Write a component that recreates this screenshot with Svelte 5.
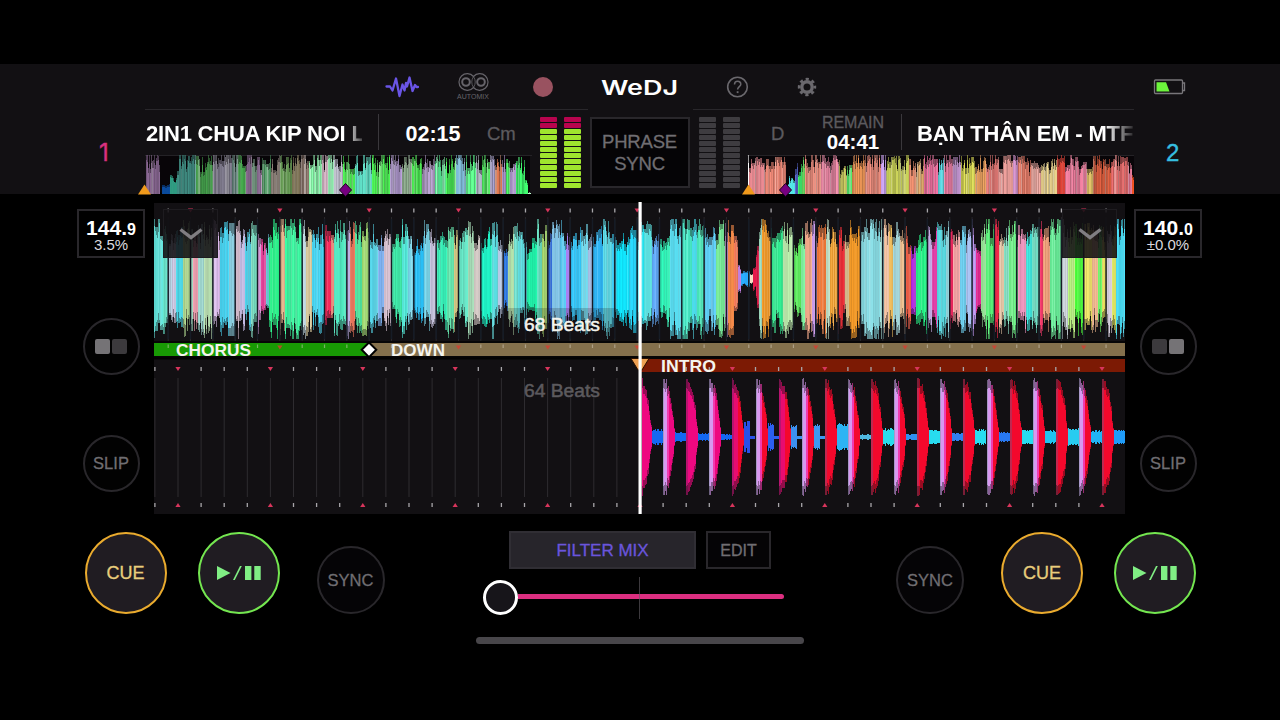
<script>
  // Each band is [start x, colour, height in px]; it runs up to the next band.
  const mainBands = [
    [154, '#62e4dc', 56], [163, '#66e0c8', 50], [168, '#b5cfe0', 42], [172, '#cbc8e2', 40], [176, '#4fd8e8', 44],
    [183, '#b0d890', 54], [190, '#a8e0c8', 52], [193, '#f0a0b0', 52], [198, '#a0d8d0', 50], [204, '#b8dfb0', 54],
    [213, '#dcc0ec', 58], [217, '#d6b4e6', 46], [220, '#48d6f4', 52], [229, '#8fd4e6', 56], [235, '#d0b8c8', 58],
    [240, '#c0b8e0', 50], [245, '#4fd0e8', 44], [251, '#78dcc0', 54], [257, '#e0a0e0', 52], [261, '#e04098', 42],
    [266, '#6cc8d8', 32], [269, '#2cf58c', 54], [280, '#e0b088', 56], [285, '#3cf5a0', 58], [302, '#c0d8e0', 58],
    [306, '#d8c898', 52], [312, '#48d4f0', 46], [324, '#f02858', 57], [331, '#f09080', 44], [334, '#50e8c0', 52],
    [346, '#c8b8f0', 60], [350, '#f47c60', 54], [355, '#50e4a0', 54], [362, '#a0d870', 52], [369, '#58d8ec', 52],
    [378, '#80b4f4', 46], [384, '#dcc4d4', 50], [392, '#40e8a8', 38], [402, '#50e8d8', 58], [408, '#78d4e8', 42],
    [413, '#28c0f8', 34], [424, '#7cd8ec', 54], [430, '#c8c4e0', 46], [437, '#38f0b8', 40], [447, '#68e8b0', 54],
    [454, '#d8c880', 48], [459, '#68e8c8', 40], [468, '#a8dcb8', 56], [474, '#d8ccc8', 42], [481, '#20f4c8', 40],
    [492, '#58dce0', 58], [498, '#b8c8e4', 42], [504, '#2878e8', 26], [508, '#b0e0a8', 46], [514, '#70e0d0', 56],
    [518, '#60dce0', 50], [527, '#20f0a8', 28], [537, '#68e0c0', 58], [542, '#a8d870', 54], [548, '#3068d0', 46],
    [552, '#88ccf0', 54], [560, '#58c8f0', 56], [566, '#a880f0', 42], [571, '#30c4f8', 40], [581, '#70dcf0', 58],
    [588, '#b0c8f0', 44], [593, '#30b8f8', 40], [603, '#60dce8', 58], [612, '#40d0f8', 44], [616, '#10e4fc', 40],
    [629, '#28d4f8', 50], [637, '#20e8f4', 50], [644, '#60e8e8', 56], [652, '#60a8f8', 46], [660, '#30f4b8', 36],
    [670, '#58dcf0', 58], [682, '#48ecc8', 60], [692, '#48dcec', 60], [697, '#48e8b8', 60], [704, '#60d0f8', 50],
    [716, '#78ec98', 54], [725, '#d8a0e0', 54], [728, '#f08848', 57], [734, '#f07858', 40], [738, '#c080e0', 14],
    [741, '#28a8f8', 8], [750, '#f0d8c0', 5], [753, '#e01848', 12], [756, '#e01848', 26], [759, '#a0dcc0', 60],
    [762, '#f09828', 56], [771, '#30ec90', 48], [783, '#b8e8a8', 57], [794, '#60f060', 32], [801, '#80f0a0', 44],
    [805, '#f0a888', 59], [812, '#d0a0f0', 58], [817, '#f07838', 48], [826, '#c0e0c8', 58], [830, '#f0a030', 48],
    [838, '#f03038', 50], [845, '#d0b888', 42], [849, '#f09828', 56], [861, '#88dce4', 60], [880, '#a8e0d8', 60],
    [884, '#f0c0a0', 58], [889, '#f4c060', 50], [893, '#a8dce0', 58], [900, '#f0c090', 52], [906, '#f06048', 50],
    [911, '#b028e0', 32], [916, '#28f488', 44], [928, '#c0a8e0', 58], [932, '#f040b0', 38], [937, '#58dce4', 57],
    [946, '#90d0d8', 52], [950, '#f02860', 57], [953, '#f8a8a8', 40], [960, '#70d0f0', 50], [966, '#a8c0f0', 46],
    [972, '#c098f0', 56], [976, '#e02890', 34], [981, '#90e090', 46], [986, '#58f078', 58], [995, '#f02848', 56],
    [999, '#e8c8a8', 52], [1004, '#80dcc0', 44], [1009, '#70f088', 56], [1018, '#f098c0', 50], [1026, '#40e8e0', 48],
    [1032, '#70d8c0', 50], [1040, '#f03868', 57], [1043, '#f0a078', 44], [1050, '#68ec98', 58], [1062, '#c8d0d8', 56],
    [1068, '#b8f080', 56], [1075, '#48f838', 52], [1084, '#f0e468', 52], [1092, '#f0b890', 50], [1098, '#70f868', 50],
    [1102, '#e8e058', 46], [1107, '#d0c8d8', 56], [1112, '#d8e060', 46], [1116, '#48dcf4', 57], [1125],
  ];

  const overviewOne = [
    [146, '#8c6a96', 39], [160, '#000000', 2], [162, '#0a4a9a', 13], [170, '#2f9a80', 19], [177, '#3f8a80', 39],
    [196, '#48a850', 35], [213, '#807c8e', 39], [232, '#608078', 38], [238, '#48b050', 37], [246, '#907098', 39],
    [252, '#70907c', 39], [257, '#907098', 39], [262, '#4a9a60', 36], [271, '#8c8078', 38], [280, '#6aa058', 35],
    [292, '#8c8060', 38], [300, '#907a70', 36], [309, '#8dffb0', 39], [322, '#d8b8c8', 39], [328, '#90f0b0', 38],
    [334, '#c8c8d8', 38], [343, '#48f850', 35], [355, '#60e0c8', 39], [372, '#50f858', 36], [390, '#b8a0d8', 39],
    [402, '#98b898', 39], [412, '#50f858', 38], [422, '#b8a0d0', 39], [435, '#60ffa0', 38], [446, '#50ff60', 35],
    [456, '#88c8e8', 39], [466, '#60ff90', 38], [476, '#b0b8c8', 39], [482, '#50e860', 37], [490, '#a8a0d0', 39],
    [495, '#e07850', 38], [502, '#a890c8', 38], [506, '#50f868', 37], [510, '#b098d0', 39], [516, '#40ff70', 34],
    [525, '#40ff70', 16], [528, '#c0ffd0', 2], [531],
  ];

  const overviewTwo = [
    [747, '#ffffff', 39], [748, '#e88890', 33], [764, '#f08a78', 34], [785, '#181018', 3], [787, '#50e0e0', 18],
    [794, '#5868d0', 38], [797, '#40f070', 24], [801, '#68d860', 38], [804, '#f09080', 38], [820, '#f08aa8', 38],
    [838, '#c8c860', 32], [846, '#50e868', 26], [851, '#f09858', 39], [864, '#f09080', 38], [880, '#c8a0f0', 39],
    [885, '#c8d058', 34], [908, '#f09070', 38], [915, '#e8b070', 30], [923, '#f070a0', 39], [937, '#60dce8', 32],
    [943, '#f080a8', 38], [952, '#d0a0e0', 39], [960, '#e0e058', 36], [974, '#e8a060', 34], [985, '#e87c78', 38],
    [998, '#e89c98', 38], [1012, '#d890d0', 39], [1017, '#e87c68', 36], [1030, '#f0a8a0', 31], [1040, '#f0d890', 27],
    [1056, '#e04438', 39], [1064, '#f080a0', 38], [1086, '#f0d070', 24], [1092, '#e06040', 39], [1110, '#f07070', 38],
    [1127, '#e87898', 30], [1131, '#f05020', 20], [1133],
  ];

  // Small sounds between the kicks of deck 2: [colour, height, width]
  const tails = [
    ['#1468f0', 8, 12], ['#1468f0', 5, 12], ['#1468f0', 4, 12], ['#1468f0', 3, 12], ['#2850e8', 16, 6],
    ['#2c60f0', 15, 6], ['#3c90f0', 14, 6], ['#3c98f0', 13, 6], ['#2cb4f4', 14, 12], ['#50b8e0', 3, 12],
    ['#28dcec', 9, 12], ['#3090f0', 3, 12], ['#28dcf0', 8, 12], ['#3080f0', 4, 12], ['#28dcf0', 8, 12],
    ['#2878f0', 5, 12], ['#28dcf0', 8, 12], ['#20c4f0', 7, 12], ['#28ccf0', 9, 12], ['#20b4f4', 7, 12],
    ['#209cf8', 8, 12],
  ];

  function createRandom(seed) {
    return () => {
      seed = (seed * 16807) % 2147483647;
      return seed / 2147483647;
    };
  }

  // Darken or lighten a colour, then mix it towards light grey
  function shade(hex, amount, pale) {
    const parts = [1, 3, 5].map(i => parseInt(hex.slice(i, i + 2), 16) * amount);
    return `rgb(${parts.map(p => Math.min(255, Math.round(p + (225 * amount - p) * pale))).join(',')})`;
  }

  function columns(bands, seed, roughness, limit, stripes) {
    const random = createRandom(seed);
    const out = [];
    let high = 0;
    let low = 0;
    for (let i = 0; i < bands.length - 1; i++) {
      const [start, color, height] = bands[i];
      const end = bands[i + 1][0];
      const next = bands[i + 1][2] ?? height;
      for (let x = start; x < end; x++) {
        // blend towards the next band unless one of them is near silence
        const t = (x - start) / (end - start);
        const base = height > 20 && next > 20 ? height + (next - height) * t * 0.6 : height;
        const peak = base > 20 ? base * 1.1 : base;
        if (x === start || random() > 0.25) {
          high = Math.min(limit, peak - Math.pow(random(), 1.5) * base * roughness);
          low = Math.min(limit, peak - Math.pow(random(), 1.5) * base * roughness);
        }
        const dark = height > 20 ? stripes : 0.05;
        const tone = 1.04 - random() * dark;
        const pale = height > 20 && random() > 0.7 ? random() * stripes * 1.6 : 0;
        out.push({ x, high, low, core: 0.76 + random() * 0.18, color: shade(color, tone, pale) });
      }
    }
    return out;
  }

  function kicks() {
    const random = createRandom(91);
    const out = [];
    for (let k = 0; k < 21; k++) {
      const start = Math.round(640 + k * 23.1);
      const [tailColor, tailHeight, tailWidth] = tails[k];
      for (let i = 0; i < 23; i++) {
        const x = start + i;
        if (x < 642 || x >= 1125) continue;
        if (i < 12) {
          const height = Math.max(9, 59 * (1 - Math.pow(i / 12, 2.7)) - random() * (i > 1 ? 7 : 2));
          let color = k < 4 ? '#ee0880' : '#f4082c';
          if (k >= 4 && k < 8 && i < 6) color = '#e80c70';
          if (k % 2 && i < 4) color = i < 1 ? '#a898c8' : '#d898f0';
          else if (k % 2 && i < 6) color = '#f03cb0';
          else if (i < 2) color = k < 8 ? '#b81470' : '#c02850';
          out.push({ x, high: height, low: height, core: 0.84, color });
        } else {
          const height = i < 12 + tailWidth ? tailHeight - random() * tailHeight * 0.3 : 1.5;
          out.push({ x, high: height, low: height, core: 1, color: tailColor });
        }
      }
    }
    return out;
  }

  function beatGrid(first, spacing, barOffset) {
    const out = [];
    for (let k = 0; first + k * spacing < 1125; k++) {
      out.push({ x: first + k * spacing, bar: k % 4 === barOffset });
    }
    return out;
  }

  const mainColumns = columns(mainBands, 17, 0.4, 60, 0.12);
  const kickColumns = kicks();
  const beatsOne = beatGrid(168.2, 22.33, 1);
  const beatsTwo = beatGrid(154.9, 23.1, 1);
  const overviews = [columns(overviewOne, 5, 0.5, 39, 0.28), columns(overviewTwo, 8, 0.46, 39, 0.26)];
  const levels = Array.from({ length: 12 }, (_, i) => i);
</script>

{#snippet meter(active)}
  <div class="meter" class:active>
    {#each [0, 1] as channel (channel)}
      <div class="meter-channel">
        {#each levels as level (level)}
          <i class:peak={level < 2}></i>
        {/each}
      </div>
    {/each}
  </div>
{/snippet}

{#snippet overview(index, offset, markerX)}
  <svg class="overview" width="387" height="40" viewBox="{offset} 0 387 40" shape-rendering="crispEdges">
    <line x1={offset} x2={offset + 387} y1="0.5" y2="0.5" stroke="#242226" />
    <rect x={offset + 1} y="1" width={index ? 386 : 384} height="38" fill="#080508" />
    {#each overviews[index] as c (c.x)}
      <rect x={c.x} y={39 - c.high} width="1" height={c.high} fill={c.color} opacity="0.6" />
      <rect x={c.x} y={39 - c.high * c.core} width="1" height={c.high * c.core} fill={c.color} />
    {/each}
    <g shape-rendering="auto">
      <path d="M{markerX} 28.500l6 6.500-6 6.500-6-6.500z" fill="#760080" stroke="#1a001c" />
      <path d="M{index ? 747.5 : 144.5} 29.500l6.500 10h-13z" fill="#f09a1c" />
    </g>
  </svg>
{/snippet}

{#snippet bpm(whole, decimal, range)}
  <div class="bpm">
    <strong>{whole}.<small>{decimal}</small></strong>
    <span>{range}</span>
  </div>
{/snippet}

{#snippet playPause()}
  <button class="round large play" aria-label="Play / pause">
    <svg width="44" height="14" viewBox="0 0 44 14">
      <path d="M0 0l13.5 7L0 14z" />
      <path d="M16 14L23 0h1.800l-7 14z" />
      <path d="M28 0h6.400v14H28zM37.300 0h6.400v14h-6.400z" />
    </svg>
  </button>
{/snippet}

<div class="screen">
  <header>
    <div class="deck-number one">1</div>

    <div class="header-main">
      <nav>
        <svg width="36" height="24" viewBox="0 0 36 24" fill="none" stroke="#6a55e6" stroke-width="2.300" stroke-linejoin="round" stroke-linecap="round">
          <path d="M2.500 11.500h3.500l2.500 4L12 3.500l3.500 17.500 3-11.500 2 6L22 8l1 3.500L25.500 2.500l3 13.500 2.500-6 1.500 2h1.500" />
        </svg>
        <div class="automix">
          <svg width="35" height="20" viewBox="0 0 34 20" fill="none" stroke="#66646a" stroke-width="1.2">
            <path d="M17 4.500a8.300 8.300 0 1 0 0 11 8.300 8.300 0 1 0 0-11z" />
            <path d="M17 4.500q3.500 5.500 0 11q-3.500-5.500 0-11z" stroke-width="0.8" />
            <circle cx="9.500" cy="10" r="3.800" stroke-width="2" />
            <circle cx="24.500" cy="10" r="3.800" stroke-width="2" />
          </svg>
          <span>AUTOMIX</span>
        </div>
        <div class="record"></div>
        <svg width="82" height="22" viewBox="0 0 82 22">
          <text x="2" y="18.500" textLength="77" lengthAdjust="spacingAndGlyphs" class="logo">WeDJ</text>
        </svg>
        <svg width="24" height="24" viewBox="0 0 24 24" fill="none" stroke="#6a686d" stroke-width="1.600">
          <circle cx="12.500" cy="12" r="9.800" />
          <path d="M9.500 9.500c0-4.300 6.300-4 6.300-.300 0 2.300-3.200 2.600-3.200 5.300" stroke-width="1.500" />
          <path d="M12.600 16.200v1.900" stroke-width="1.800" />
        </svg>
        <svg width="22" height="22" viewBox="0 0 22 22" fill="none" stroke="#6a686d">
          <circle cx="11" cy="11" r="5.200" stroke-width="3.400" />
          <circle cx="11" cy="11" r="7.900" stroke-width="2.600" stroke-dasharray="3.200 3.004" stroke-dashoffset="1.600" />
        </svg>
      </nav>

      <div class="decks">
        <section class="deck left">
          <div class="track">
            <div class="info">
              <div class="title">2IN1 CHUA KIP NOI L</div>
              <div class="time"><strong>02:15</strong></div>
              <div class="key">Cm</div>
            </div>
            {@render overview(0, 145, 345.5)}
          </div>
          {@render meter(true)}
        </section>

        <button class="phrase-sync">PHRASE<br />SYNC</button>

        <section class="deck right">
          {@render meter(false)}
          <div class="track">
            <div class="info">
              <div class="key">D</div>
              <div class="time"><span>REMAIN</span><strong>04:41</strong></div>
              <div class="title">BẠN THÂN EM - MTF</div>
            </div>
            {@render overview(1, 746, 784.5)}
          </div>
        </section>
      </div>
    </div>

    <div class="header-end">
      <svg class="battery" width="33" height="18" viewBox="0 0 33 18" fill="none">
        <rect x="1.500" y="2" width="28" height="13.500" rx="1" stroke="#78767a" stroke-width="1.300" />
        <path d="M29.500 5h2v7.500h-2" stroke="#78767a" stroke-width="1.300" />
        <path d="M3.500 4.200h9.500l3.500 9.300h-13z" fill="#6cf43c" />
      </svg>
      <div class="deck-number two">2</div>
    </div>
  </header>

  <main>
    <aside>
      {@render bpm(144, 9, '3.5%')}
      <button class="round small pads" aria-label="Pads"><i class="lit"></i><i></i></button>
      <button class="round small">SLIP</button>
    </aside>

    <div class="waves">
      <svg width="971" height="312" viewBox="154 202 971 312">
        <rect x="154" y="203" width="971" height="140" fill="#121013" />
        <rect x="154" y="358" width="971" height="156" fill="#121013" />

        {#each beatsOne as beat (beat.x)}
          <path d="M{beat.x} 217v124" stroke="#29272b" />
        {/each}
        {#each beatsTwo as beat (beat.x)}
          {#if beat.x < 638}
            <path d="M{beat.x} 378v119" stroke="#2e2c30" />
          {/if}
        {/each}

        <g shape-rendering="crispEdges">
          {#each mainColumns as c (c.x)}
            <rect x={c.x} y={279 - c.high} width="1" height={c.high + c.low} fill={c.color} opacity="0.6" />
            <rect x={c.x} y={279 - c.high * c.core} width="1" height={(c.high + c.low) * c.core} fill={c.color} />
          {/each}
          {#each kickColumns as c (c.x)}
            <rect x={c.x} y={437 - c.high} width="1" height={c.high + c.low} fill={c.color} opacity="0.6" />
            <rect x={c.x} y={437 - c.high * c.core} width="1" height={(c.high + c.low) * c.core} fill={c.color} />
          {/each}
        </g>

        <!-- phrase strips -->
        <rect x="154" y="341" width="971" height="18" fill="#060506" />
        <rect x="154" y="343" width="215" height="13" fill="#189a04" />
        <rect x="369" y="343" width="756" height="13" fill="#84704c" />
        <rect x="154" y="357.500" width="486" height="2" fill="#020202" />
        <rect x="640" y="359" width="485" height="13" fill="#7c1a04" />

        {#each beatsOne as beat (beat.x)}
          <path d="M{beat.x} 219v120" stroke="#161c26" stroke-width="1.500" />
          {#if beat.bar}
            <path d="M{beat.x - 2.6} 208.500h5.200l-2.600 4z" fill="#d8355c" />
            <path d="M{beat.x - 2.6} 345.500h5.200l-2.600 4z" fill="#d83c30" opacity="0.8" />
          {:else}
            <path d="M{beat.x} 208.500v4" stroke="#a8a6aa" stroke-width="1.300" />
            <path d="M{beat.x} 344.500v3.500" stroke="#d8d0c0" stroke-width="1.200" opacity="0.5" />
          {/if}
        {/each}

        {#each beatsTwo as beat (beat.x)}
          {#if beat.bar}
            <path d="M{beat.x - 2.6} 367h5.200l-2.600 4z" fill="#d8355c" />
            <path d="M{beat.x - 2.6} 507h5.200l-2.600-4z" fill="#d8355c" />
          {:else}
            <path d="M{beat.x} 367v4" stroke="#a8a6aa" stroke-width="1.300" />
            <path d="M{beat.x} 503v4" stroke="#a8a6aa" stroke-width="1.300" />
          {/if}
        {/each}

        <path d="M369 342.500l7.300 7.300-7.300 7.300-7.300-7.300z" fill="#fff" stroke="#000" stroke-width="2" />
        <path d="M631 358.500h18l-7 11.500h-4z" fill="#eda052" stroke="#2a1000" />
        <rect x="508" y="308" width="108" height="30" fill="#121013" opacity="0.200" />

        <g class="labels">
          <text x="524" y="330.500" textLength="76" lengthAdjust="spacingAndGlyphs" class="beats">68 Beats</text>
          <text x="524" y="396.500" textLength="76" lengthAdjust="spacingAndGlyphs" class="beats dim">64 Beats</text>
          <text x="176" y="355.700" textLength="75" lengthAdjust="spacingAndGlyphs">CHORUS</text>
          <text x="391" y="355.700" textLength="54" lengthAdjust="spacingAndGlyphs">DOWN</text>
          <text x="661" y="371.500" textLength="55" lengthAdjust="spacingAndGlyphs">INTRO</text>
        </g>

        <rect x="638.500" y="202" width="3.200" height="312" fill="#fff" />
      </svg>

      {#each ['start', 'end'] as side (side)}
        <button class="expand {side}" aria-label="Expand deck">
          <svg width="24" height="14" viewBox="0 0 24 14" fill="none" stroke="#807e82" stroke-width="3.400">
            <path d="M1.500 2.500l10.500 8 10.500-8" />
          </svg>
        </button>
      {/each}
    </div>

    <aside>
      {@render bpm(140, 0, '±0.0%')}
      <button class="round small pads" aria-label="Pads"><i></i><i class="lit"></i></button>
      <button class="round small">SLIP</button>
    </aside>
  </main>

  <footer>
    <div class="transport">
      <button class="round large cue">CUE</button>
      {@render playPause()}
      <button class="round medium">SYNC</button>
    </div>

    <div class="mixer">
      <div class="modes">
        <button class="filter">FILTER MIX</button>
        <button class="edit">EDIT</button>
      </div>
      <div class="crossfader">
        <div class="knob"></div>
        <div class="rail"></div>
        <div class="centre-mark"></div>
      </div>
      <div class="home-bar"></div>
    </div>

    <div class="transport end">
      <button class="round medium">SYNC</button>
      <button class="round large cue">CUE</button>
      {@render playPause()}
    </div>
  </footer>
</div>

<style>
  :global(body) {
    background: #000;
  }

  .screen {
    width: 1280px;
    height: 720px;
    padding-top: 64px;
    box-sizing: border-box;
    overflow: hidden;
    background: #000;
    color: #fff;
    font-family: 'Liberation Sans', Arial, sans-serif;
  }

  svg {
    display: block;
  }

  button {
    box-sizing: border-box;
    padding: 0;
    border: 2px solid #29272b;
    background: #050406;
    color: #706e72;
    font-family: inherit;
    -webkit-text-stroke: 0.3px currentColor;
  }

  header {
    display: flex;
    height: 130px;
    background: #121013;
  }

  .deck-number {
    font-size: 24px;
    line-height: 28px;
    -webkit-text-stroke: 0.4px currentColor;
  }

  .deck-number.one {
    width: 46px;
    padding: 75px 0 0 99px;
    color: #d9307e;
    font-family: Inter, sans-serif;
  }

  .deck-number.two {
    padding: 43px 0 0 32px;
    color: #36bfe0;
  }

  .header-main {
    width: 989px;
  }

  .battery {
    margin: 14px 0 0 19px;
  }

  nav {
    display: grid;
    grid-template-columns: 70px 71px 70px 124px 70px 70px;
    align-items: center;
    justify-items: center;
    height: 45px;
    padding-left: 222px;
  }

  .automix {
    display: flex;
    flex-direction: column;
    align-items: center;
    color: #66646a;
    font-size: 7px;
    line-height: 8px;
    padding-left: 1px;
  }

  .automix svg {
    margin-bottom: 1px;
  }

  .record {
    width: 20px;
    height: 20px;
    border-radius: 50%;
    background: #995260;
  }

  .logo {
    fill: #fff;
    font-family: Inter, sans-serif;
    font-size: 20.5px;
    font-weight: 600;
  }

  .decks {
    display: flex;
    justify-content: space-between;
    height: 85px;
  }

  .deck {
    display: flex;
    justify-content: space-between;
    box-sizing: border-box;
    border-top: 1px solid #29272b;
  }

  .deck.left {
    width: 443px;
    padding-right: 7px;
  }

  .deck.right {
    width: 441px;
    padding-left: 6px;
  }

  .track {
    width: 387px;
  }

  .overview {
    overflow: visible;
  }

  .info {
    display: flex;
    align-items: center;
    height: 36px;
    margin: 4px 0 5px;
  }

  .title {
    width: 216px;
    white-space: nowrap;
    font-size: 22px;
    font-weight: bold;
    line-height: 40px;
    height: 36px;
  }

  .left .title {
    padding-left: 1px;
    letter-spacing: -0.2px;
    mask-image: linear-gradient(90deg, #000 200px, transparent 222px);
  }

  .right .title {
    margin-left: -1px;
    letter-spacing: -0.15px;
    padding-left: 15px;
    border-left: 1px solid #3a383c;
    mask-image: linear-gradient(90deg, #000 204px, transparent 236px);
  }

  .time {
    display: flex;
    flex-direction: column;
    align-items: center;
    font-size: 21.5px;
    line-height: 20px;
  }

  .left .time {
    width: 108px;
    height: 36px;
    margin-left: 16px;
    border-left: 1px solid #3a383c;
    line-height: 41px;
  }

  .right .time {
    width: 98px;
    font-size: 20.5px;
    padding-top: 1px;
  }

  .time span {
    color: #5c5a5e;
    font-size: 16px;
    line-height: 18px;
    -webkit-text-stroke: 0.3px currentColor;
  }

  .key {
    padding-top: 3px;
    color: #5c5a5e;
    font-size: 18.5px;
    -webkit-text-stroke: 0.3px currentColor;
  }

  .right .key {
    width: 33px;
    padding-left: 24px;
  }

  .meter {
    display: flex;
    gap: 7px;
    padding-top: 7px;
  }

  .meter-channel {
    display: flex;
    flex-direction: column;
    gap: 1.3px;
  }

  .meter i {
    width: 17px;
    height: 4.7px;
    border-radius: 1px;
    background: #3e3c40;
  }

  .meter.active i {
    background: #9fe52e;
  }

  .meter.active .peak {
    background: #b8044e;
  }

  .phrase-sync {
    width: 100px;
    height: 71px;
    margin: 8px 2px 0 0;
    font-size: 18.5px;
    line-height: 22px;
    letter-spacing: -0.2px;
  }

  main {
    display: flex;
    height: 312px;
    margin-top: 8px;
  }

  aside {
    display: flex;
    flex-direction: column;
    align-items: center;
    width: 86px;
    padding: 7px 0 0 68px;
  }

  .waves + aside {
    padding-left: 0;
  }

  .bpm {
    display: flex;
    flex-direction: column;
    align-items: center;
    box-sizing: border-box;
    width: 68px;
    height: 49px;
    padding-top: 6px;
    border: 2px solid #29272b;
  }

  .bpm strong {
    height: 19px;
    font-size: 21px;
    line-height: 21px;
  }

  .bpm small {
    font-size: 16px;
  }

  .bpm span {
    color: #dcdadf;
    font-size: 15px;
    line-height: 17px;
  }

  .round {
    display: flex;
    align-items: center;
    justify-content: center;
    border-radius: 50%;
  }

  .small {
    width: 57px;
    height: 57px;
    margin-top: 60px;
    font-size: 16.5px;
    background: #020202;
  }

  .pads {
    gap: 1.5px;
  }

  .pads i {
    width: 15px;
    height: 15px;
    border-radius: 2px;
    background: #3c3a3d;
  }

  .pads .lit {
    background: #757376;
  }

  .waves {
    position: relative;
    width: 971px;
  }

  .labels text {
    fill: #f4f4ee;
    font-size: 16.5px;
    font-weight: bold;
  }

  .labels .beats {
    font-size: 18px;
    font-weight: normal;
    stroke: #f4f4ee;
    stroke-width: 0.5px;
  }

  .labels .dim {
    fill: #5c5a5e;
    stroke: #5c5a5e;
  }

  .expand {
    position: absolute;
    top: 7px;
    display: flex;
    justify-content: center;
    width: 55px;
    height: 49px;
    padding-top: 17px;
    border: 1px solid #1e1c20;
    background: rgba(18, 16, 19, 0.88);
  }

  .expand.start {
    left: 9px;
  }

  .expand.end {
    right: 8px;
  }

  footer {
    display: grid;
    grid-template-columns: 301px 1fr 301px;
    height: 142px;
    padding: 0 84px;
  }

  .transport {
    display: flex;
    align-items: flex-start;
    gap: 31px;
    padding: 18px 0 0 0.5px;
  }

  .transport.end {
    justify-content: flex-end;
  }

  .large {
    width: 82px;
    height: 82px;
    background: #201c22;
  }

  .cue {
    border-color: #eaab2e;
    color: #e8cd7c;
    font-size: 18px;
  }

  .play {
    border-color: #74e650;
    fill: #80ee84;
  }

  .medium {
    width: 68px;
    height: 68px;
    margin: 14px 0 0 6px;
    font-size: 16.5px;
  }

  .end .medium {
    margin: 14px 6px 0 0;
  }

  .mixer {
    display: flex;
    flex-direction: column;
    align-items: center;
  }

  .modes {
    display: flex;
    gap: 10px;
    margin-top: 17px;
  }

  .modes button {
    height: 38px;
    padding-top: 1px;
  }

  .modes .filter {
    width: 187px;
    background: #27252b;
    border-color: #302e34;
    color: #6a55dc;
    font-size: 17px;
  }

  .modes .edit {
    width: 65px;
    font-size: 16px;
  }

  .crossfader {
    position: relative;
    display: flex;
    align-items: center;
    width: 301px;
    height: 42px;
    margin: 8px 13px 0 0;
  }

  .knob {
    box-sizing: border-box;
    width: 35px;
    height: 35px;
    margin-top: -1px;
    border: 3px solid #fff;
    border-radius: 50%;
    background: #17151a;
  }

  .rail {
    flex: 1;
    height: 5px;
    margin-top: -3px;
    border-radius: 0 3px 3px 0;
    background: #dc2f80;
  }

  /* sits over the rail to show the middle of the fader */
  .centre-mark {
    position: absolute;
    left: 156px;
    top: 0;
    width: 1px;
    height: 42px;
    background: rgba(100, 95, 102, 0.6);
  }

  .home-bar {
    width: 328px;
    height: 7px;
    margin-top: 18px;
    border-radius: 4px;
    background: #48464a;
  }
</style>
